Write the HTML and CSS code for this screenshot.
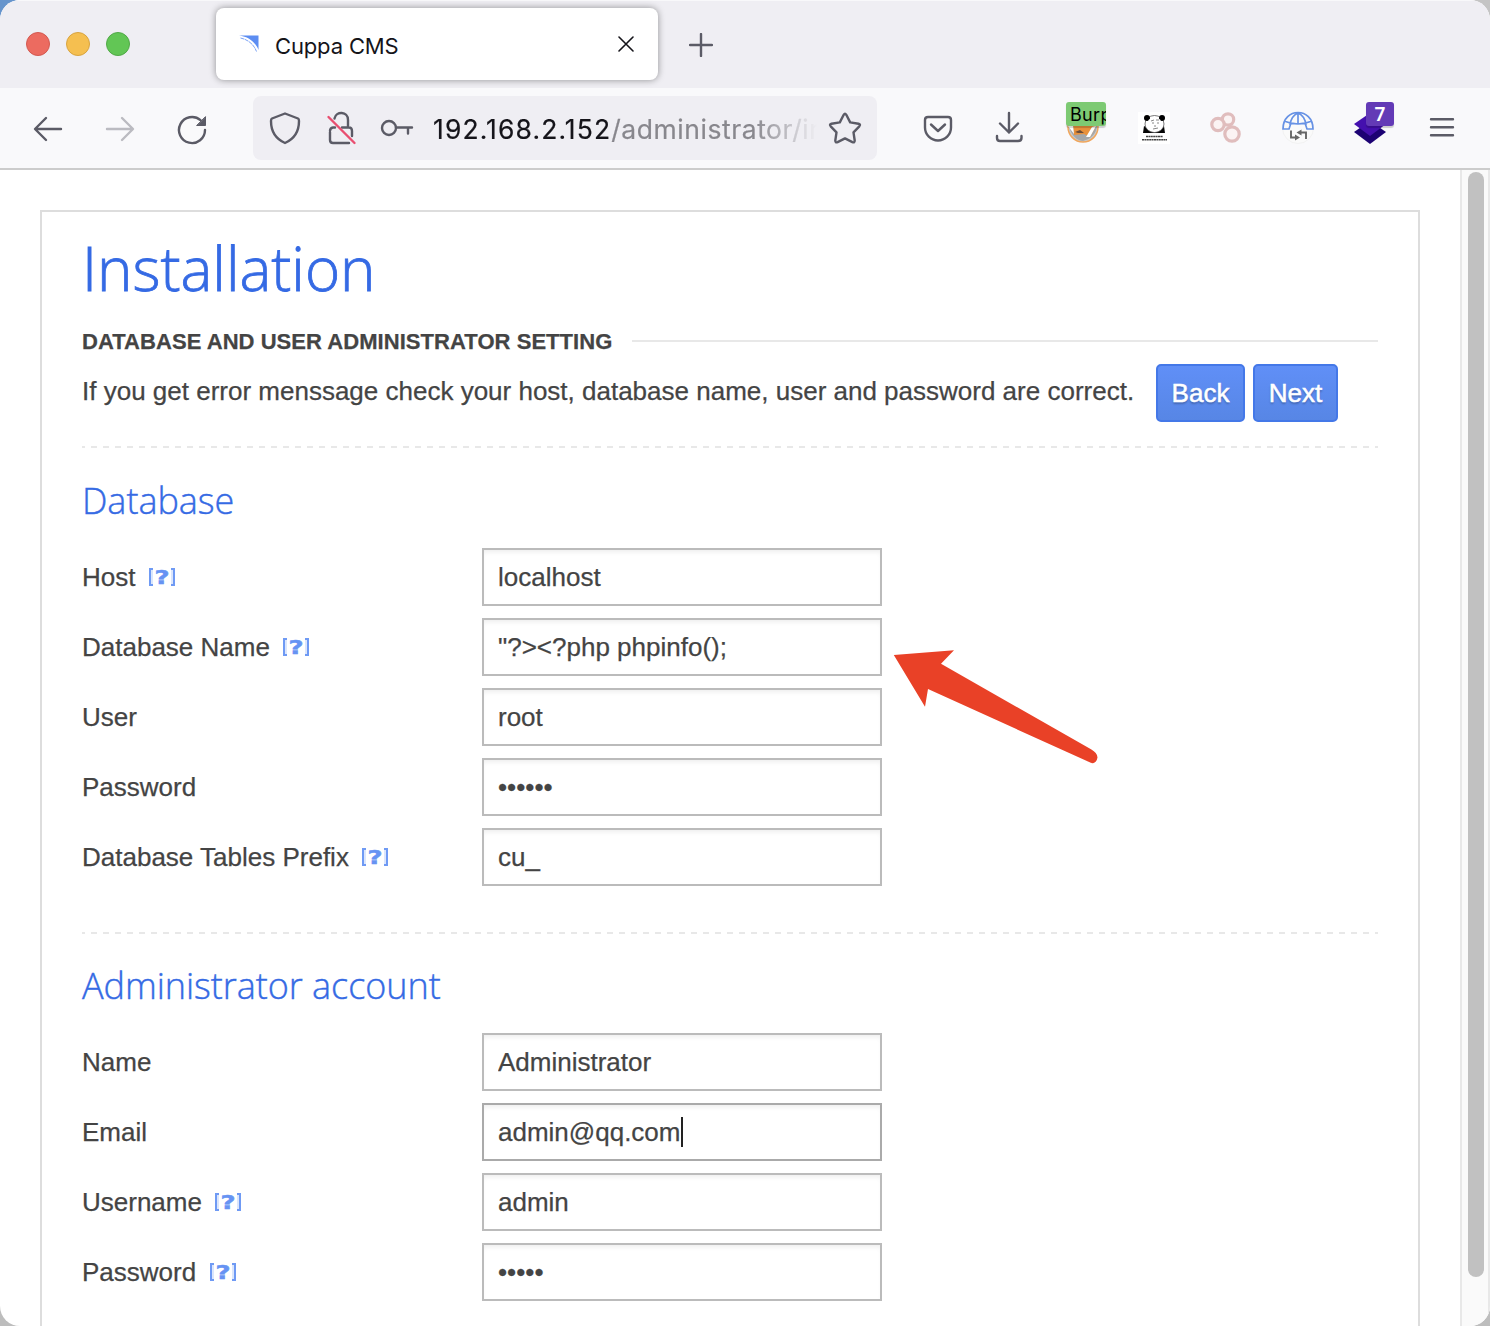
FILE: index.html
```html
<!DOCTYPE html>
<html lang="en">
<head>
<meta charset="utf-8">
<title>Cuppa CMS</title>
<link rel="stylesheet" href="styles.css">
</head>
<body>
<svg width="0" height="0" class="defs" aria-hidden="true">
  <symbol id="help" viewBox="0 0 26 18">
    <path d="M4 1H1V17H4M22 1H25V17H22" fill="none" stroke="#6f9af4" stroke-width="2"/>
    <path d="M3 2V16M23 2V16" stroke="#cfdefc" stroke-width="1.500"/>
    <text x="0" y="16" transform="translate(5.600 0) scale(1.300 1)" font-family="DejaVu Sans" font-weight="bold" font-size="20" fill="#6693f3" stroke="#6693f3" stroke-width=".5">?</text>
  </symbol>
</svg>
<div class="window">
  <header class="tabbar">
    <div class="lights"><i class="red"></i><i class="yellow"></i><i class="green"></i></div>
    <div class="tab">
      <svg class="favicon" width="20" height="18" viewBox="0 0 20 18"><path d="M0 .5H19.500V15C17 8 10 1.500 0 .5Z" fill="#5c8df2"/><path d="M1.500 3C9 4.500 15 9.500 17.500 16.500" fill="none" stroke="#7ba3f5" stroke-width="1" stroke-dasharray="4 .6"/></svg>
      <span class="tab-title">Cuppa CMS</span>
      <svg class="close" width="16" height="16" viewBox="0 0 16 16"><path d="M1 1L15 15M15 1L1 15" stroke="#15141a" stroke-width="1.600" stroke-linecap="round"/></svg>
    </div>
    <svg class="plus" width="24" height="24" viewBox="0 0 24 24"><path d="M12 1V23M1 12H23" stroke="#5b5b66" stroke-width="2.400" stroke-linecap="round"/></svg>
  </header>
  <nav class="toolbar">
    <div class="tools">
      <svg width="72" height="64" viewBox="12 96 72 64" class="line"><path d="M61 129H35.500M46 118L35 129L46 140"/></svg>
      <svg width="72" height="64" viewBox="84 96 72 64" class="line faded"><path d="M107 129H132.500M122 118L133 129L122 140"/></svg>
      <svg width="72" height="64" viewBox="156 96 72 64" class="line"><path d="M205 130A13 13 0 1 1 200.500 120.200"/><path d="M205.500 117V125.500H197Z" class="solid"/></svg>
    </div>
    <div class="urlbar">
      <svg width="56" height="64" viewBox="257 96 56 64" class="line"><path d="M285 113.500L298 118.500Q299 119 299 121C299 132 294 139 285 143C276 139 271 132 271 121Q271 119 272 118.500Z"/></svg>
      <svg width="56" height="64" viewBox="313 96 56 64" class="line"><path d="M334.500 118.500C336 111 348 111 348 120V127M330 132V140Q330 143 333 143H349M330 131Q330 128 333 127.500H335M342 127.500H349Q352 127.500 352 131V136"/><path d="M328.500 117L354.500 143" class="slash"/></svg>
      <svg width="56" height="64" viewBox="369 96 56 64" class="line"><circle cx="389" cy="128" r="7"/><path d="M396 127.500H412M408 128V133.500"/></svg>
      <span class="url"><b>192.168.2.152</b>/administrator/in</span>
      <svg width="56" height="64" viewBox="817 96 56 64" class="line star"><path d="M843.700 114.800Q845 112.800 846.300 114.800L850.200 122.400L858.500 123.700Q861 124.400 859.300 126.300L853.500 132.400L854.700 140.500Q854.700 143 852.400 142.100L845 138.400L837.600 142.100Q835.300 143 835.300 140.500L836.500 132.400L830.700 126.300Q829 124.400 831.500 123.700L839.800 122.400Z"/></svg>
    </div>
    <div class="tools">
      <svg width="72" height="64" viewBox="902 96 72 64" class="line"><path d="M928 117H948Q951 117 951 120V127.500A13 13 0 0 1 925 127.500V120Q925 117 928 117ZM931 124.500L938 131L945 124.500"/></svg>
      <svg width="72" height="64" viewBox="974 96 72 64" class="line"><path d="M1009 113V132.500M1000 123.500L1009 132.500L1018 123.500M997 136V138Q997 141 1000 141H1018Q1021.500 141 1021.500 138V136"/></svg>
      <div class="ext burp">
        <svg width="72" height="64" viewBox="1046 96 72 64"><circle cx="1083" cy="127" r="15" fill="#c9cacb" stroke="#f0a65c" stroke-width="1.500"/><path d="M1069 126C1071 136 1078 141 1083 141C1091 139 1096 134 1097 126Z" fill="#a5a7a9"/><path d="M1073 124H1097L1090 137L1084 134L1074 135Z" fill="#e8913c"/><path d="M1068 126L1073 126L1074 134ZM1092 127L1096 126L1090 137L1086 137Z" fill="#fff"/><path d="M1075 132L1080 130L1084 133L1078 133Z" fill="#6b4c38"/></svg>
        <span class="badge green-badge">Burp</span>
      </div>
      <svg width="72" height="64" viewBox="1118 96 72 64"><path d="M1138 112H1170V144H1138Z" fill="#fff"/><path d="M1143 133L1144 126L1149 129H1160L1164 126L1165 133Z" fill="#050505"/><ellipse cx="1154.500" cy="124" rx="9.500" ry="8.500" fill="#fff" stroke="#555" stroke-width=".8"/><circle cx="1147" cy="118" r="3"/><circle cx="1162" cy="118" r="3"/><ellipse cx="1154.500" cy="124.500" rx="7.500" ry="7" fill="#fff"/><path d="M1151 121L1154 120M1156 120H1159M1152 123H1154M1157 123H1159M1155 125V127M1153 129L1158 128" stroke="#888" fill="none"/><path d="M1146 136.500H1163M1142 139.800H1167" stroke="#444" stroke-width="1.500" stroke-dasharray="2 .4"/></svg>
      <svg width="72" height="64" viewBox="1190 96 72 64" fill="#fbf3f3" stroke="#e0bdbd" stroke-width="3.200"><circle cx="1228" cy="119.500" r="5.700"/><circle cx="1218" cy="124.500" r="6.200"/><circle cx="1232" cy="134" r="7.200"/></svg>
      <svg width="72" height="64" viewBox="1262 96 72 64"><circle cx="1298" cy="128" r="15.500" fill="#fafafa" stroke="#f2f2f2"/><path d="M1283 129C1283 107 1313 107 1313 129H1307L1305 123Q1298 125 1291 123L1289 129ZM1284 121Q1298 127 1312 121M1298 113V124M1298 113Q1291 116 1290 125M1298 113Q1305 116 1306 125" fill="none" stroke="#6792e5" stroke-width="1.700"/><path d="M1291 130.500V137.500H1296M1306 139V132.500H1300" fill="none" stroke="#666" stroke-width="1.900"/><path d="M1295 134.500L1300 137.500L1295 140.500ZM1301.500 129.500L1296.500 132.500L1301.500 135.500Z" fill="#666"/></svg>
      <div class="ext">
        <svg width="72" height="64" viewBox="1334 96 72 64"><path d="M1354 132L1370 121L1386 132L1370 144Z" fill="#1c0273"/><path d="M1354 124L1370 113L1386 124L1370 136Z" fill="#4410ae"/></svg>
        <span class="badge purple-badge">7</span>
      </div>
      <svg width="72" height="64" viewBox="1406 96 72 64" class="line"><path d="M1431 119.300H1453M1431 127.300H1453M1431 135.300H1453"/></svg>
    </div>
  </nav>
  <div class="viewport">
    <main class="panel">
      <h1>Installation</h1>
      <div class="legend"><span>DATABASE AND USER ADMINISTRATOR SETTING</span></div>
      <div class="intro">
        <p>If you get error menssage check your host, database name, user and password are correct.</p>
        <button class="back">Back</button><button class="next">Next</button>
      </div>
      <section>
        <h2>Database</h2>
        <div class="row"><label>Host <svg class="help"><use href="#help"/></svg></label><input value="localhost"></div>
        <div class="row"><label>Database Name <svg class="help"><use href="#help"/></svg></label><input value="&quot;?&gt;&lt;?php phpinfo();"></div>
        <div class="row"><label>User</label><input value="root"></div>
        <div class="row"><label>Password</label><input type="password" value="123456"></div>
        <div class="row"><label>Database Tables Prefix <svg class="help"><use href="#help"/></svg></label><input value="cu_"></div>
      </section>
      <section class="account">
        <h2>Administrator account</h2>
        <div class="row"><label>Name</label><input value="Administrator"></div>
        <div class="row"><label>Email</label><div class="field active">admin@qq.com<i class="caret"></i></div></div>
        <div class="row"><label>Username <svg class="help"><use href="#help"/></svg></label><input value="admin"></div>
        <div class="row"><label>Password <svg class="help"><use href="#help"/></svg></label><input type="password" value="12345"></div>
      </section>
    </main>
    <div class="scrollbar"><div class="thumb"></div></div>
  </div>
</div>
<svg class="arrow" width="206" height="116" viewBox="893 649 206 116"><path d="M893.800 655L954 650.300L941 663.700L1091 749.300Q1097.500 753 1097.500 757.500Q1096.500 762.500 1093 763.200Q1091 763.200 1088 761.500L928 689L925 706.700Z" fill="#e94127"/></svg>
</body>
</html>
```

FILE: styles.css
```css
* { box-sizing: border-box; }
body {
  margin: 0;
  width: 1490px;
  height: 1326px;
  overflow: hidden;
  background: linear-gradient(90deg, #6694cc 0 30px, #c4c4c4 30px) 0 0 / 100% 40px no-repeat, #bdbdbd;
  font-family: "Liberation Sans", Arial, sans-serif;
  color: #444;
}
svg { display: block; flex: none; }
.defs { position: absolute; }
.window {
  height: 1326px;
  border-radius: 20px;
  overflow: hidden;
  background: #fff;
  display: flex;
  flex-direction: column;
}

/* Browser chrome */
.tabbar {
  height: 88px;
  flex: none;
  background: #efeef3;
  box-shadow: inset 0 1px #f8f8fa;
  display: flex;
  align-items: center;
}
.lights { display: flex; gap: 16px; width: 190px; padding-left: 26px; }
.lights i { width: 24px; height: 24px; border-radius: 50%; border: 1px solid; }
.lights .red { background: #ec6b60; border-color: #d35950; }
.lights .yellow { background: #f5bf50; border-color: #d8a440; }
.lights .green { background: #62c655; border-color: #51a947; }
.tab {
  width: 442px;
  height: 72px;
  margin-left: 26px;
  padding: 0 24px 0 23px;
  border-radius: 8px;
  background: #fff;
  box-shadow: 0 0 7px rgba(0, 0, 0, .4);
  display: flex;
  align-items: center;
}
.tab-title {
  flex: 1;
  margin-left: 16px;
  padding-top: 4px;
  font: 22px/28px Inter, sans-serif;
  letter-spacing: -.15px;
  color: #15141a;
}
.favicon { margin-bottom: 1px; }
.plus { margin: 2px 0 0 31px; }
.toolbar {
  height: 82px;
  flex: none;
  padding: 8px 12px;
  background: #f9f9fb;
  border-bottom: 2px solid #ccc;
  display: flex;
  justify-content: space-between;
}
.tools { display: flex; height: 64px; }
.line { fill: none; stroke: #5b5b66; stroke-width: 2.400; stroke-linecap: round; stroke-linejoin: round; }
.faded { stroke: #bbbbc1; }
.solid { fill: #5b5b66; stroke-width: 1; }
.slash { stroke: #e94e70; }
.urlbar {
  width: 624px;
  height: 64px;
  padding: 0 4px;
  border-radius: 8px;
  background: #efeef3;
  display: flex;
  align-items: center;
}
.url {
  width: 384px;
  margin: 2px 0 0 8px;
  overflow: hidden;
  white-space: nowrap;
  font: 26.500px/36px Inter, sans-serif;
  letter-spacing: .55px;
  color: #88878d;
  -webkit-text-stroke: .2px;
  -webkit-mask-image: linear-gradient(90deg, #000 320px, transparent 384px);
  mask-image: linear-gradient(90deg, #000 320px, transparent 384px);
}
.url b { font-weight: 400; color: #15141a; letter-spacing: 1.100px; }
.ext { position: relative; }
.badge {
  position: absolute;
  top: 6px;
  height: 24px;
  border-radius: 3px;
  overflow: hidden;
  box-shadow: 0 2px 1px rgba(0, 0, 0, .18);
  line-height: 25px;
}
.green-badge { left: 20px; width: 40px; padding-left: 4px; background: #7dca73; color: #000; font-family: Inter, sans-serif; font-size: 18px; letter-spacing: .3px; }
.purple-badge { left: 32px; width: 28px; background: #633ab6; color: #fff; text-align: center; font: 600 19px/25px "Noto Sans", sans-serif; }

/* Page */
.viewport { flex: 1; min-height: 0; display: flex; justify-content: space-between; }
.panel {
  width: 1380px;
  height: 1160px;
  margin: 40px 0 0 40px;
  padding: 21px 40px 0;
  border: 2px solid #ddd;
  -webkit-text-stroke: .25px;
}
h1, h2 { margin: 0; font-family: "Open Sans", sans-serif; font-weight: 300; color: #356ae4; white-space: nowrap; }
h1 { font-size: 60px; line-height: 70px; -webkit-text-stroke: .8px; }
h2 { font-size: 36px; line-height: 40px; margin-bottom: 27px; letter-spacing: -.05px; -webkit-text-stroke: .4px; }
.legend {
  display: flex;
  align-items: center;
  gap: 20px;
  margin-top: 23px;
  font-size: 22px;
  font-weight: 700;
  line-height: 30px;
  white-space: nowrap;
}
.legend span { width: 530px; padding-top: 1px; letter-spacing: .05px; margin-bottom: -1px; }
.legend::after { content: ""; flex: 1; height: 2px; background: #e8e8e8; }
.intro { display: flex; align-items: center; height: 58px; margin-top: 8px; font-size: 26px; }
.intro p { width: 1074px; margin: 0; padding-bottom: 4px; line-height: 30px; white-space: nowrap; }
button {
  height: 58px;
  margin: 0 8px 0 0;
  padding: 0;
  border: 2px solid #4478e8;
  border-radius: 5px;
  background: linear-gradient(#608ff7, #5786e5);
  color: #fff;
  font: 26px/54px "Liberation Sans", Arial, sans-serif;
  text-shadow: 0 2px 2px rgba(0, 0, 0, .25);
  -webkit-text-stroke: .5px #fff;
}
.back { width: 89px; }
.next { width: 85px; }
section {
  margin-top: 24px;
  padding-top: 35px;
  background: repeating-linear-gradient(90deg, #e8e8e8 0 3px, transparent 3px 9px, #e8e8e8 9px 12px) 0 0 / 100% 2px no-repeat;
}
.account { margin-top: 46px; padding-top: 34px; }
.row { display: flex; align-items: center; height: 58px; margin-bottom: 12px; font-size: 26px; }
label { width: 400px; display: flex; align-items: center; gap: 13.400px; white-space: nowrap; }
.help { width: 26px; height: 18px; }
input, .field {
  width: 400px;
  height: 58px;
  margin: 0;
  padding: 0 14px;
  border: 2px solid #bbb;
  border-radius: 0;
  outline: 0;
  background: #fff;
  box-shadow: inset 0 4px 5px -2px rgba(0, 0, 0, .07);
  color: #444;
  font: 26px/54px "Liberation Sans", Arial, sans-serif;
  -webkit-text-stroke: .25px;
}
.field { display: flex; align-items: center; }
.active { border-color: #aaa; }
.caret { width: 2px; height: 30px; margin-left: 1px; background: #222; }
.scrollbar {
  width: 30px;
  padding: 2px 0 0 6px;
  border: solid #e8e8e8;
  border-width: 0 2px;
  background: #fafafa;
}
.thumb { width: 16px; height: 1105px; border-radius: 8px; background: #c1c1c1; }
.arrow { position: absolute; left: 893px; top: 649px; }
```
